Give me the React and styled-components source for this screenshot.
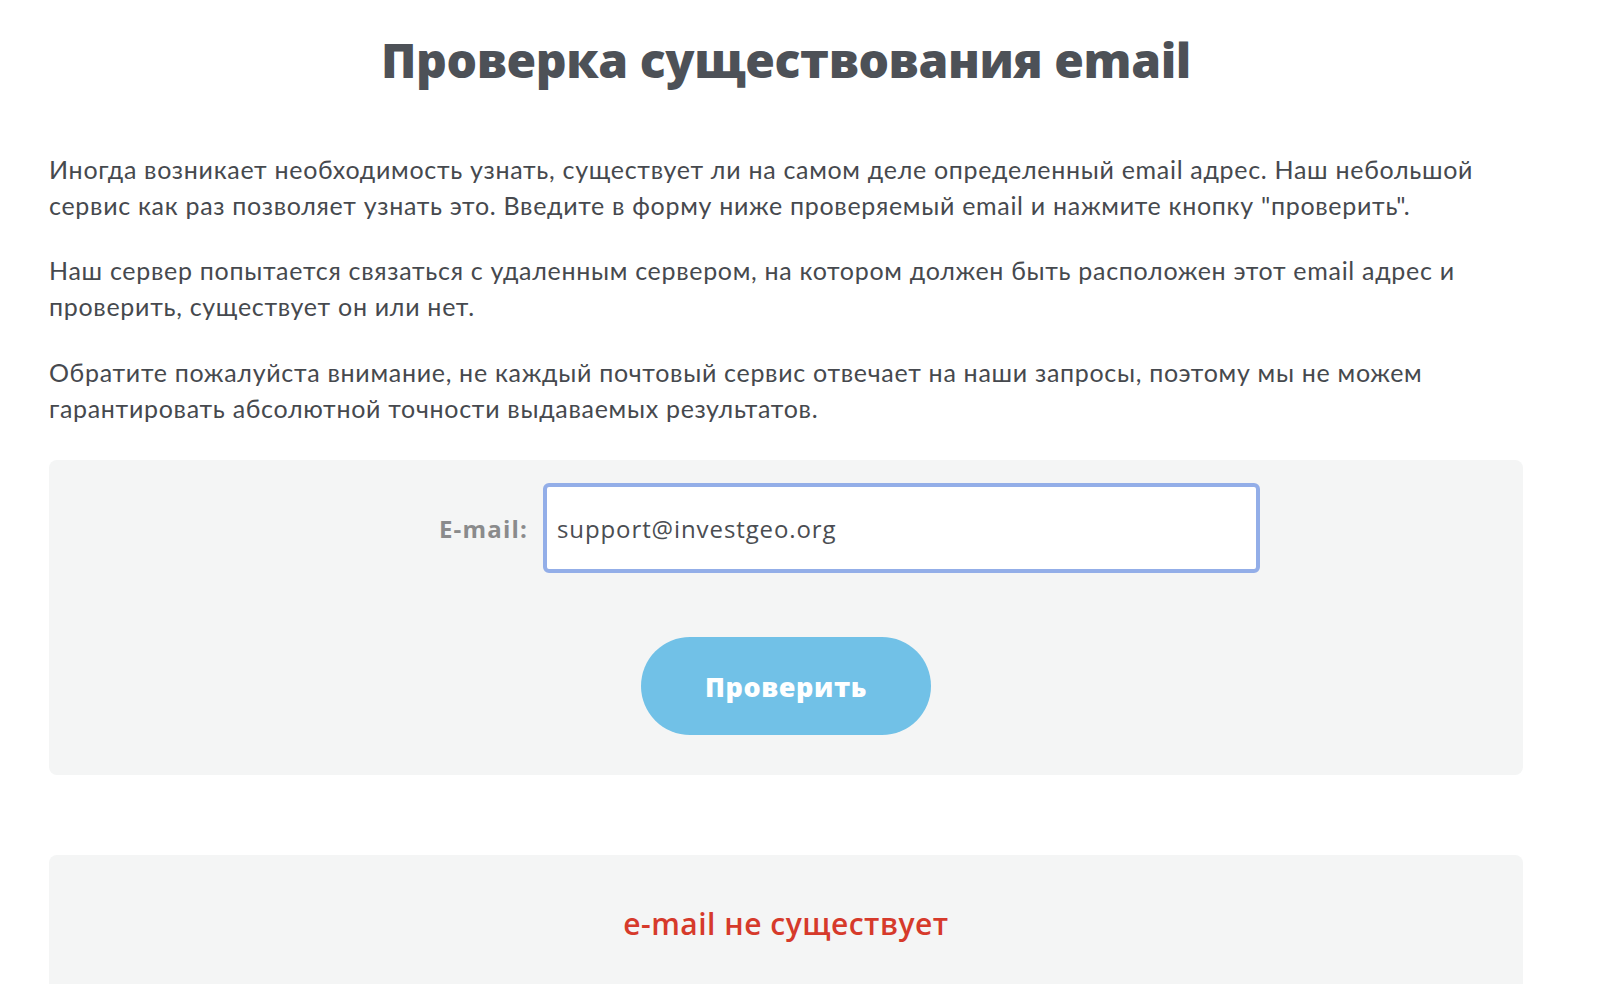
import React, { useState } from "react";
import styled, { createGlobalStyle } from "styled-components";

const GlobalStyle = createGlobalStyle`
  body {
    margin: 0;
    background: #ffffff;
    font-family: "Open Sans", "Liberation Sans", sans-serif;
  }
`;

const Page = styled.div`
  padding: 0 77px 0 49px;
`;

const Title = styled.h1`
  margin: 31px 0 0;
  text-align: center;
  font-family: "Open Sans", "Liberation Sans", sans-serif;
  font-weight: 800;
  font-size: 48px;
  line-height: 58px;
  letter-spacing: -0.4px;
  color: #4d5157;
`;

const Intro = styled.div`
  margin-top: 63px;
`;

const Para = styled.p`
  margin: 0 0 30px;
  font-family: "Lato", "Open Sans", sans-serif;
  font-size: 25px;
  line-height: 35.7px;
  letter-spacing: 0.7px;
  white-space: nowrap;
  color: #46494e;
`;

const Panel = styled.div`
  background: #f4f5f5;
  border-radius: 8px;
  padding: ${(p) => p.$pad};
  margin-top: ${(p) => p.$top || 0}px;
`;

const Row = styled.div`
  display: grid;
  grid-template-columns: 494px 717px 1fr;
  align-items: center;
`;

const Label = styled.label`
  justify-self: end;
  padding-right: 15px;
  font-family: "Open Sans", "Liberation Sans", sans-serif;
  font-weight: 700;
  font-size: 24px;
  letter-spacing: 1.2px;
  color: #8a8b8c;
`;

const Input = styled.input`
  box-sizing: border-box;
  height: 90px;
  width: 100%;
  padding: 0 10px;
  border: 4px solid #93aee8;
  border-radius: 6px;
  outline: none;
  background: #ffffff;
  font-family: "Open Sans", "Liberation Sans", sans-serif;
  font-size: 24px;
  letter-spacing: 0.9px;
  color: #4a4d52;
`;

const Actions = styled.div`
  display: flex;
  justify-content: center;
  margin-top: 64px;
`;

const Button = styled.button`
  width: 290px;
  height: 98px;
  border: none;
  border-radius: 49px;
  background: #71c1e7;
  color: #ffffff;
  font-family: "Open Sans", "Liberation Sans", sans-serif;
  font-weight: 800;
  font-size: 27px;
  letter-spacing: 0.6px;
  cursor: pointer;
`;

const Result = styled.div`
  text-align: center;
  font-family: "Open Sans", "Liberation Sans", sans-serif;
  font-weight: 600;
  font-size: 30px;
  line-height: 40px;
  letter-spacing: 0.5px;
  color: #d63a2b;
`;

export default function App() {
  const [email, setEmail] = useState("support@investgeo.org");

  return (
    <>
      <GlobalStyle />
      <Page>
        <Title>Проверка существования email</Title>
        <Intro>
          <Para>
            Иногда возникает необходимость узнать, существует ли на самом деле определенный email адрес. Наш небольшой
            <br />
            сервис как раз позволяет узнать это. Введите в форму ниже проверяемый email и нажмите кнопку "проверить".
          </Para>
          <Para>
            Наш сервер попытается связаться с удаленным сервером, на котором должен быть расположен этот email адрес и
            <br />
            проверить, существует он или нет.
          </Para>
          <Para>
            Обратите пожалуйста внимание, не каждый почтовый сервис отвечает на наши запросы, поэтому мы не можем
            <br />
            гарантировать абсолютной точности выдаваемых результатов.
          </Para>
        </Intro>
        <Panel $pad="23px 0 40px" $top={34}>
          <Row>
            <Label htmlFor="email">E-mail:</Label>
            <Input id="email" value={email} onChange={(e) => setEmail(e.target.value)} />
          </Row>
          <Actions>
            <Button type="button">Проверить</Button>
          </Actions>
        </Panel>
        <Panel $pad="49px 0 200px" $top={80}>
          <Result>e-mail не существует</Result>
        </Panel>
      </Page>
    </>
  );
}
